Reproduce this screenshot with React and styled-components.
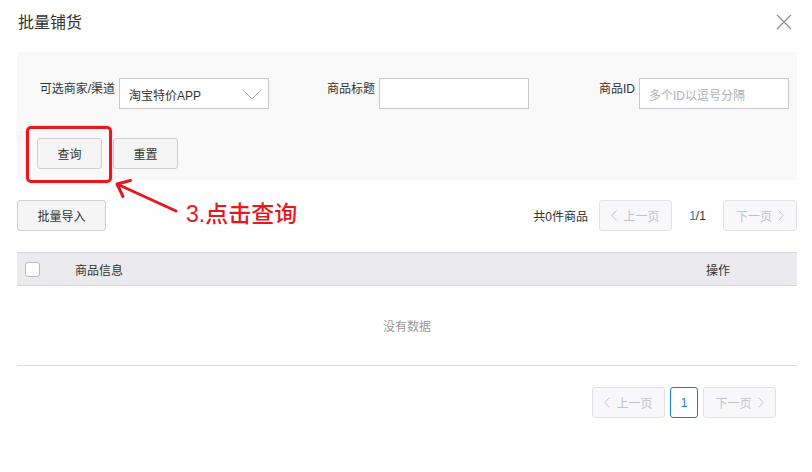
import React from "react";
import styled, { createGlobalStyle } from "styled-components";

const GlobalStyle = createGlobalStyle`
  html, body {
    margin: 0;
    padding: 0;
    background: #fff;
  }
  body {
    font-family: "Liberation Sans", "Noto Sans CJK SC", sans-serif;
    font-size: 12px;
    color: #333;
  }
`;

const Page = styled.div`
  position: relative;
  width: 812px;
  height: 472px;
  box-sizing: border-box;
  padding: 0 15px 0 17px;
`;

const Header = styled.div`
  display: flex;
  justify-content: space-between;
  align-items: center;
  height: 42px;
  padding-bottom: 10px;
  box-sizing: content-box;
`;

const Title = styled.h3`
  margin: 0 0 0 1px;
  font-size: 16px;
  font-weight: 400;
  color: #333;
`;

const Close = styled.span`
  display: flex;
  margin-right: 5px;
  margin-top: 1px;
`;

const FilterPanel = styled.div`
  background: #f9f9fa;
  padding: 26px 12px 11px 12px;
`;

const FieldRow = styled.div`
  display: grid;
  grid-template-columns: 240px 260px 260px;
`;

const Field = styled.div`
  display: flex;
  justify-content: flex-end;
  align-items: flex-start;
  gap: 4px;
`;

const Label = styled.label`
  line-height: 22px;
  color: #333;
  white-space: nowrap;
`;

const TextBox = styled.div`
  width: 150px;
  height: 31px;
  box-sizing: border-box;
  border: 1px solid #c9c9cd;
  background: #fff;
  display: flex;
  align-items: center;
  justify-content: space-between;
  padding: 2px 7px 0 9px;
  color: ${(p) => (p.$placeholder ? "#b0b0b4" : "#333")};
  font-size: 12px;
`;

const ButtonRow = styled.div`
  display: flex;
  gap: 11px;
  margin-top: 29px;
  padding-left: 8px;
`;

const Button = styled.button`
  height: 31px;
  min-width: ${(p) => p.$w || 65}px;
  box-sizing: border-box;
  border: 1px solid ${(p) => (p.$disabled ? "#e2e2e6" : "#cfcfd3")};
  border-radius: 3px;
  background: ${(p) => (p.$disabled ? "#f8f8fa" : "#f5f5f6")};
  color: ${(p) => (p.$disabled ? "#c3c3c7" : "#333")};
  font-family: inherit;
  font-size: 12px;
  display: flex;
  align-items: center;
  justify-content: center;
  gap: 6px;
  padding: 0 10px;
  cursor: pointer;
`;

const PageNum = styled(Button)`
  min-width: 28px;
  padding: 0;
  border-color: #1f7ad6;
  background: #fff;
  color: #1f7ad6;
`;

const Toolbar = styled.div`
  display: flex;
  justify-content: space-between;
  align-items: center;
  margin-top: 20px;
`;

const Pager = styled.div`
  display: flex;
  align-items: center;
`;

const Total = styled.span`
  margin-right: 11px;
`;

const PageInfo = styled.span`
  width: 51px;
  text-align: center;
  color: #333;
`;

const Current = styled.span`
  color: #1f7ad6;
`;

const Table = styled.div`
  margin-top: 21px;
`;

const HeadRow = styled.div`
  display: flex;
  align-items: center;
  height: 34px;
  box-sizing: border-box;
  background: #ebebef;
  border-top: 1px solid #d5d5da;
  border-bottom: 1px solid #d5d5da;
`;

const Checkbox = styled.span`
  width: 15px;
  height: 15px;
  box-sizing: border-box;
  border: 1px solid #b9b9be;
  border-radius: 3px;
  background: #fff;
  margin-left: 8px;
`;

const HeadCell = styled.span`
  color: #333;
  margin-left: ${(p) => p.$ml || 0}px;
  flex: ${(p) => (p.$grow ? 1 : "none")};
  width: ${(p) => (p.$w ? `${p.$w}px` : "auto")};
`;

const EmptyRow = styled.div`
  height: 80px;
  box-sizing: border-box;
  display: flex;
  align-items: center;
  justify-content: center;
  color: #999;
  border-bottom: 1px solid #dcdcdf;
`;

const BottomPager = styled.div`
  display: flex;
  justify-content: flex-end;
  gap: 5px;
  margin-top: 21px;
  padding-right: 21px;
`;

const HighlightBox = styled.div`
  position: absolute;
  left: 26px;
  top: 126px;
  width: 86px;
  height: 57px;
  box-sizing: border-box;
  border: 3px solid #e8161d;
  border-radius: 5px;
  box-shadow: 0 0 2px rgba(232, 22, 29, 0.4);
`;

const ArrowLayer = styled.svg`
  position: absolute;
  left: 0;
  top: 0;
  pointer-events: none;
`;

const Note = styled.div`
  position: absolute;
  left: 186px;
  top: 199px;
  font-size: 23px;
  font-weight: 500;
  color: #e8161d;
  line-height: 30px;
  white-space: nowrap;
`;

const Chevron = ({ dir = "left" }) => (
  <svg width="6" height="11" viewBox="0 0 6 11">
    <path
      d={dir === "left" ? "M5.5 0.5 L0.8 5.5 L5.5 10.5" : "M0.5 0.5 L5.2 5.5 L0.5 10.5"}
      fill="none"
      stroke="#c3c3c7"
      strokeWidth="1"
    />
  </svg>
);

export default function App() {
  return (
    <Page>
      <GlobalStyle />
      <Header>
        <Title>批量铺货</Title>
        <Close>
          <svg width="16" height="16" viewBox="0 0 16 16">
            <path d="M1 1 L15 15 M15 1 L1 15" stroke="#8e8e93" strokeWidth="1.2" />
          </svg>
        </Close>
      </Header>

      <FilterPanel>
        <FieldRow>
          <Field>
            <Label>可选商家/渠道</Label>
            <TextBox>
              淘宝特价APP
              <svg width="18" height="10" viewBox="0 0 18 10">
                <path d="M0.5 0.5 L9 9 L17.5 0.5" fill="none" stroke="#a8a8ad" strokeWidth="1" />
              </svg>
            </TextBox>
          </Field>
          <Field>
            <Label>商品标题</Label>
            <TextBox />
          </Field>
          <Field>
            <Label>商品ID</Label>
            <TextBox $placeholder>多个ID以逗号分隔</TextBox>
          </Field>
        </FieldRow>
        <ButtonRow>
          <Button>查询</Button>
          <Button>重置</Button>
        </ButtonRow>
      </FilterPanel>

      <Toolbar>
        <Button $w={89}>批量导入</Button>
        <Pager>
          <Total>共0件商品</Total>
          <Button $disabled $w={73}>
            <Chevron dir="left" />
            上一页
          </Button>
          <PageInfo>
            <Current>1</Current>/1
          </PageInfo>
          <Button $disabled $w={74}>
            下一页
            <Chevron dir="right" />
          </Button>
        </Pager>
      </Toolbar>

      <Table>
        <HeadRow>
          <Checkbox />
          <HeadCell $ml={35} $grow>
            商品信息
          </HeadCell>
          <HeadCell $w={91}>操作</HeadCell>
        </HeadRow>
        <EmptyRow>没有数据</EmptyRow>
      </Table>

      <BottomPager>
        <Button $disabled $w={73}>
          <Chevron dir="left" />
          上一页
        </Button>
        <PageNum>1</PageNum>
        <Button $disabled $w={73}>
          下一页
          <Chevron dir="right" />
        </Button>
      </BottomPager>

      <HighlightBox />
      <ArrowLayer width="812" height="472" viewBox="0 0 812 472">
        <path
          d="M176 211 L117 184 M117 184 L130.5 180.5 M117 184 L123 196.5"
          fill="none"
          stroke="#e8161d"
          strokeWidth="3"
          strokeLinecap="round"
          strokeLinejoin="round"
        />
      </ArrowLayer>
      <Note>3.点击查询</Note>
    </Page>
  );
}
